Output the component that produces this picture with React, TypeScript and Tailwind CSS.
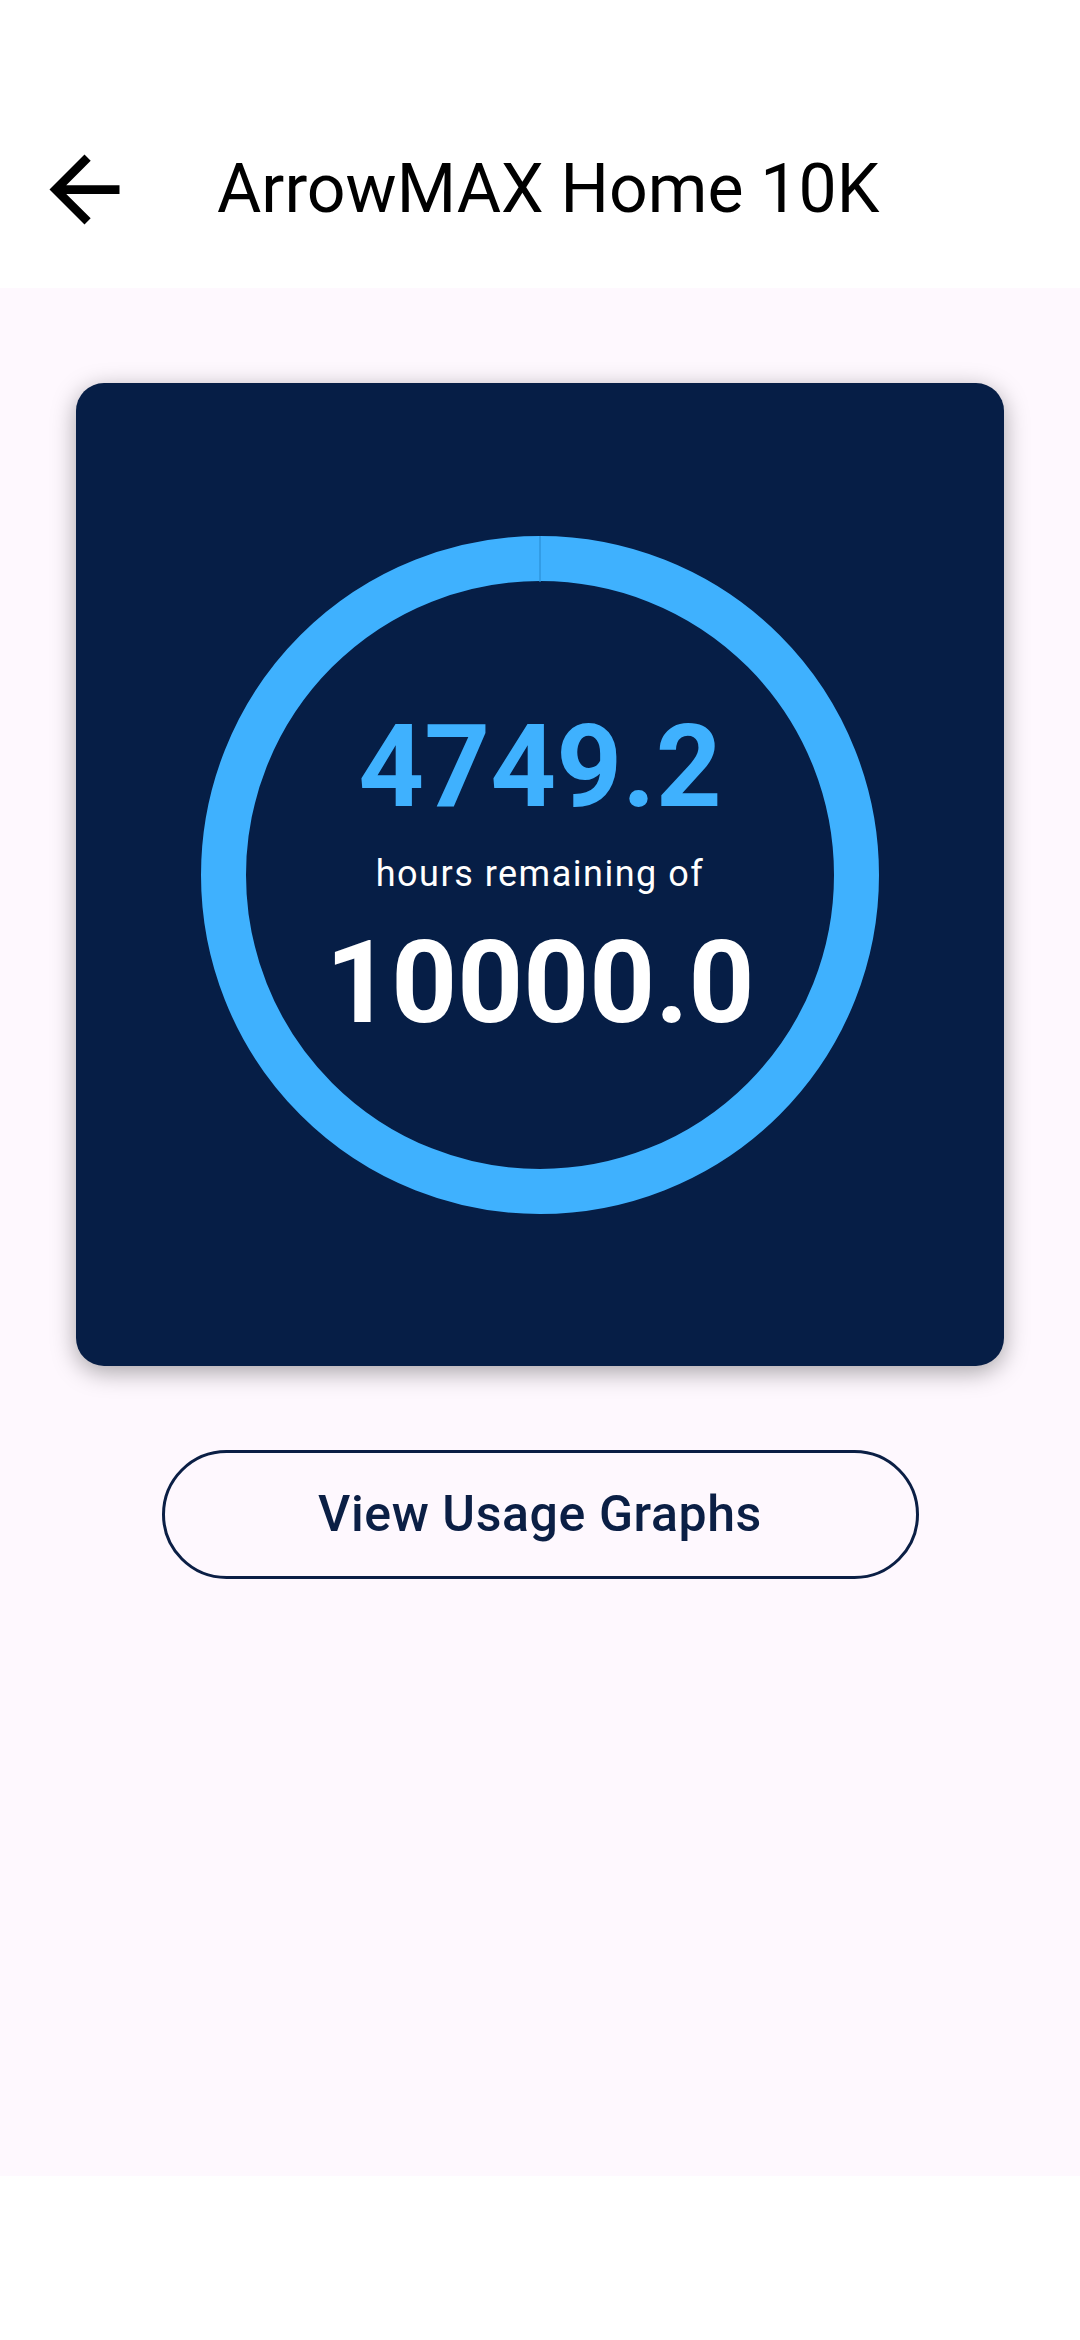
import React from "react";

function BackArrow() {
  return (
    <svg width="105" height="105" viewBox="0 0 24 24" fill="#000">
      <path d="M20 11H7.83l5.59-5.59L12 4l-8 8 8 8 1.41-1.41L7.83 13H20v-2z" />
    </svg>
  );
}

function Ring() {
  return (
    <svg className="absolute inset-0" width="678" height="678" viewBox="0 0 678 678">
      <circle cx="339" cy="339" r="316.5" fill="none" stroke="#3fb1fe" strokeWidth="45" />
      <line x1="339" y1="0" x2="339" y2="46" stroke="#2a8fd6" strokeWidth="1.2" />
    </svg>
  );
}

export default function App() {
  return (
    <div
      className="w-[1080px] h-[2340px] flex flex-col bg-white"
      style={{ fontFamily: "Roboto, 'Noto Sans', sans-serif" }}
    >
      <header className="h-[288px] shrink-0 bg-white flex items-center pt-[90px] pl-[32px]">
        <BackArrow />
        <h1 className="ml-[80px] text-[68px] leading-none text-black font-normal">ArrowMAX Home 10K</h1>
      </header>
      <main className="h-[1888px] shrink-0 bg-[#fef8fe] flex flex-col items-center pt-[95px]">
        <div className="w-[928px] h-[983px] rounded-[28px] bg-[#061e46] shadow-[0_6px_24px_rgba(0,0,0,0.35)] flex items-center justify-center">
          <div className="relative w-[678px] h-[678px] flex flex-col items-center justify-center">
            <Ring />
            <div className="relative flex flex-col items-center">
              <span className="text-[115px] leading-none font-bold text-[#3fb1fe]">4749.2</span>
              <span className="mt-[32px] text-[36px] leading-none tracking-[1.5px] text-white">hours remaining of</span>
              <span className="mt-[33px] text-[115px] leading-none font-bold text-white">10000.0</span>
            </div>
          </div>
        </div>
        <button className="mt-[84px] w-[757px] h-[129px] rounded-full border-[3px] border-[#0b1f45] bg-transparent flex items-center justify-center text-[50px] tracking-[0.6px] font-medium text-[#0b1f45]">
          View Usage Graphs
        </button>
      </main>
      <div className="flex-1 bg-white" />
    </div>
  );
}
